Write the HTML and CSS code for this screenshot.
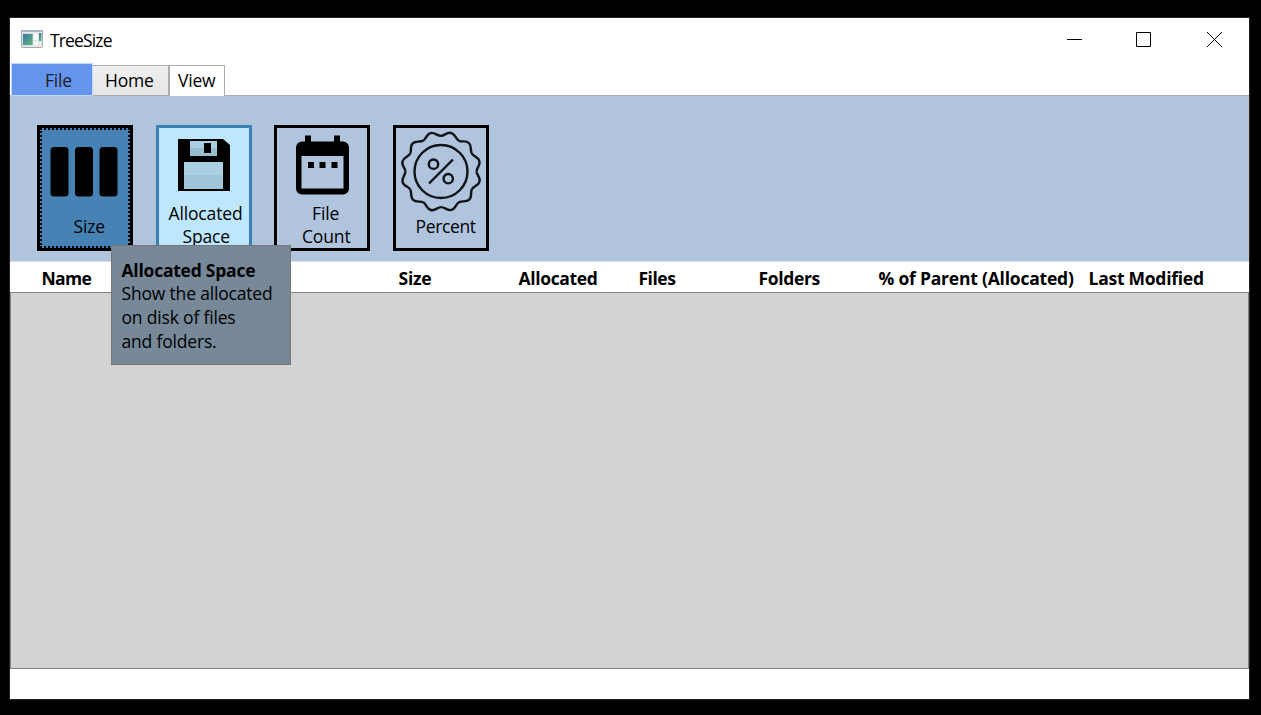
FILE: index.html
```html
<!DOCTYPE html>
<html lang="en">
<head>
<meta charset="utf-8">
<title>TreeSize</title>
<link rel="stylesheet" href="styles.css">
</head>
<body>
<div class="window">
  <header class="titlebar">
    <svg class="app-icon" width="24" height="20" viewBox="0 0 24 20">
      <defs><linearGradient id="pane" x1="0" y1="0" x2="1" y2="1"><stop offset="0" stop-color="#3f74a5"/><stop offset="1" stop-color="#5dba78"/></linearGradient></defs>
      <rect x="1.5" y="1.500" width="21" height="17" rx="1" fill="#e6e8ea" stroke="#a2a9b1"/>
      <path d="M1 2h22" stroke="#aab5c5" stroke-width="2"/>
      <rect x="2.500" y="4.500" width="10.500" height="12" fill="url(#pane)" stroke="#f8f8f8" stroke-width=".6"/>
      <rect x="14" y="5" width="4" height="6" fill="#fafafa"/>
      <rect x="14" y="13" width="4" height="3" fill="#fafafa"/>
      <rect x="19" y="4" width="2.500" height="8" fill="url(#pane)"/>
    </svg>
    <span class="app-title">TreeSize</span>
    <div class="controls">
      <svg width="15" height="15" viewBox="0 0 15 15"><path d="M0 7.5h15"/></svg>
      <svg width="15" height="15" viewBox="0 0 15 15"><path d="M.5.5h14v14H.5z"/></svg>
      <svg width="15" height="15" viewBox="0 0 15 15"><path d="M0 0l15 15M15 0L0 15"/></svg>
    </div>
  </header>
  <nav class="tabs">
    <div class="tab file">File</div>
    <div class="tab home">Home</div>
    <div class="tab view">View</div>
  </nav>
  <section class="ribbon">
    <button class="tool selected">
      <svg class="pic" width="90" height="85" viewBox="0 0 90 85"><rect x="10.500" y="19" width="18" height="49.500" rx="3.500"/><rect x="35" y="19" width="18" height="49.500" rx="3.500"/><rect x="59.500" y="19" width="18" height="49.500" rx="3.500"/></svg>
      <span class="label size-label">Size</span>
    </button>
    <button class="tool hover">
      <svg class="pic" width="90" height="71" viewBox="0 0 90 71">
        <path d="M19 11h45l7 6v46H19z"/>
        <path d="M31 13h27v7H31z" fill="#a9cfe3"/><path d="M31 20h27v8H31z" fill="#9abdcf"/>
        <path d="M45 15h7v10h-7z"/>
        <path d="M25 34h39v13H25z" fill="#a9cfe3"/><path d="M25 47h39v14H25z" fill="#a0c5d8"/>
      </svg>
      <span class="label alloc-label">Allocated</span>
      <span class="label space-label">Space</span>
    </button>
    <button class="tool">
      <svg class="pic" width="90" height="71" viewBox="0 0 90 71">
        <rect x="28" y="7.500" width="6" height="9"/><rect x="57" y="7.500" width="6" height="9"/>
        <path fill-rule="evenodd" d="M25 13.500H66a6 6 0 0 1 6 6V60.500a6 6 0 0 1-6 6H25a6 6 0 0 1-6-6V19.500a6 6 0 0 1 6-6zM24.500 28V60.500H66.500V28z"/>
        <path d="M31 34h6v6h-6zM42.500 34h6v6h-6zM54.500 34h6v6h-6z"/>
      </svg>
      <span class="label fl-label">File</span>
      <span class="label count-label">Count</span>
    </button>
    <button class="tool">
      <svg class="pic" width="90" height="85" viewBox="-45 -43.500 90 85" fill="none" stroke="#101317" stroke-width="2.400">
        <defs><path id="lobe" d="M0-35.600C3.500-35.600 5.900-39.800 10.200-38.500C14.300-37.400 14.300-32.900 17.800-30.830"/></defs>
        <use href="#lobe"/><use href="#lobe" transform="rotate(30)"/><use href="#lobe" transform="rotate(60)"/><use href="#lobe" transform="rotate(90)"/>
        <use href="#lobe" transform="rotate(120)"/><use href="#lobe" transform="rotate(150)"/><use href="#lobe" transform="rotate(180)"/><use href="#lobe" transform="rotate(210)"/>
        <use href="#lobe" transform="rotate(240)"/><use href="#lobe" transform="rotate(270)"/><use href="#lobe" transform="rotate(300)"/><use href="#lobe" transform="rotate(330)"/>
        <circle r="26.500"/><circle cx="-7.500" cy="-7.300" r="4.700"/><circle cx="7.200" cy="7.200" r="4.700"/><path d="M-12 12L12-12"/>
      </svg>
      <span class="label percent-label">Percent</span>
    </button>
    <aside class="tooltip">
      <b class="tip-title">Allocated Space</b>
      <span>Show the allocated</span>
      <span>on disk of files</span>
      <span>and folders.</span>
    </aside>
  </section>
  <div class="columns">
    <span>Name</span><span>Size</span><span>Allocated</span><span>Files</span><span>Folders</span><span>% of Parent (Allocated)</span><span>Last Modified</span>
  </div>
  <main class="list"></main>
  <footer class="status"></footer>
</div>
</body>
</html>
```

FILE: styles.css
```css
* { box-sizing: border-box; }
body { margin: 0; height: 715px; padding: 17px 11px 15px 9px; background: #000; overflow: hidden; font: 17.5px/24px "Open Sans", "Noto Sans", sans-serif; color: #000; }
.window { height: 683px; border: 1px solid #242424; background: #fff; display: flex; flex-direction: column; }
.titlebar { height: 45px; display: flex; align-items: center; padding: 0 27px 0 11px; flex: none; }
.app-icon { margin: -3px 0 0 -1px; }
.app-title { margin: -2px 0 0 6px; letter-spacing: -.85px; }
.controls { margin: -2px 0 0 auto; display: flex; gap: 56px; stroke: #000; fill: none; }
.controls svg:first-child { margin-right: -2px; }
.tabs { height: 33px; flex: none; display: flex; align-items: flex-end; border-bottom: 1px solid #acacac; padding-left: 1px; letter-spacing: -.2px; }
.tab { white-space: nowrap; }
.file { width: 82px; height: 33px; margin-bottom: -1px; background: #6495ed; border: 1px solid #c3d6f8; color: #222; padding: 4px 0 0 33px; }
.home { width: 76px; height: 30px; background: linear-gradient(#f0f0f0, #e5e5e5); border: 1px solid #acacac; border-width: 1px 1px 0 0; padding: 2px 0 0 12px; }
.view { width: 56px; height: 31px; margin-bottom: -1px; background: #fff; border: 1px solid #acacac; border-bottom: 0; padding: 2px 0 0 8px; }
.ribbon { position: relative; height: 166px; flex: none; display: flex; align-items: flex-start; gap: 23px; padding: 29px 26px 0; background: #b0c4de; border: 1px solid #bbc2cc; border-top: 0; border-bottom-color: #d5dfec; }
.tool { width: 96px; height: 126px; flex: none; border: 3px solid #000; padding: 0; background: transparent; font: inherit; letter-spacing: -.15px; color: #000; display: flex; flex-direction: column; align-items: flex-start; }
.tool:nth-child(3) { margin-left: -1px; }
.selected { background: #4682b4; outline: 2px dotted #000; outline-offset: -5px; }
.hover { background: #bee6fd; border-color: #3c7fb1; }
.pic { flex: none; display: block; }
.label { height: 23px; line-height: 24px; white-space: nowrap; }
.size-label { margin: 1px 0 0 33.5px; }
.percent-label { margin: 1px 0 0 19.5px; letter-spacing: -.35px; }
.alloc-label { margin: 2px 0 0 9.5px; }
.space-label { margin-left: 23.5px; }
.fl-label { margin: 2px 0 0 35px; }
.count-label { margin-left: 25px; }
.tooltip { position: absolute; left: 100px; top: 149px; width: 180px; height: 120px; border: 1px solid #767676; background: #778899; padding: 12px 9.5px; display: flex; flex-direction: column; align-items: flex-start; white-space: nowrap; z-index: 2; letter-spacing: -.18px; }
.tip-title { height: 23px; letter-spacing: -.24px; }
.columns { height: 30px; flex: none; display: grid; grid-template-columns: 357px 120px 120px 120px 120px 210px 1fr; padding: 4px 0 0 31.5px; font-weight: 700; white-space: nowrap; letter-spacing: -.26px; }
.columns span:first-child { letter-spacing: -.65px; }
.columns span:nth-child(3), .columns span:nth-child(5) { letter-spacing: -.35px; }
.columns span:nth-child(4) { letter-spacing: -.5px; }
.columns span:nth-child(6) { letter-spacing: -.21px; }
.list { height: 377px; flex: none; background: #d3d3d3; border: 1px solid #828282; }
.status { flex: 1; }
```
